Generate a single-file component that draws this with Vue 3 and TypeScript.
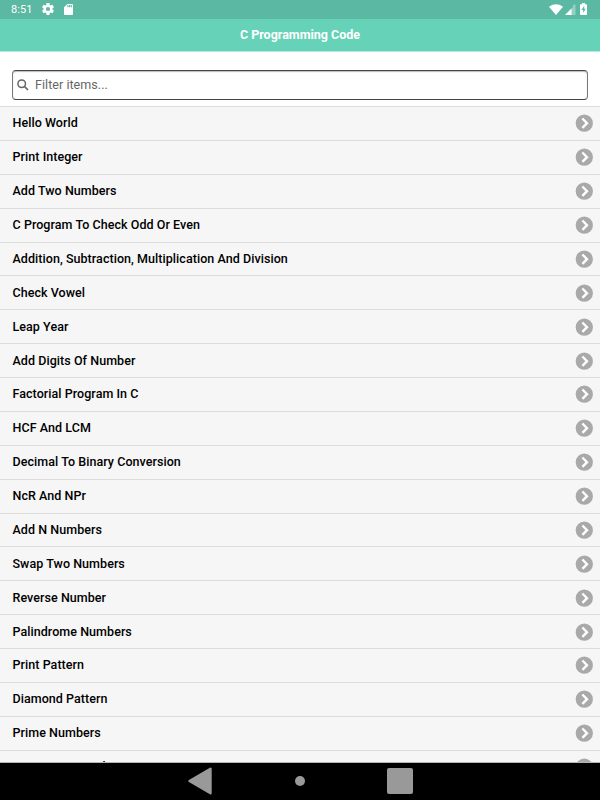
<script setup lang="ts">
const items: string[] = [
  'Hello World', 'Print Integer', 'Add Two Numbers', 'C Program To Check Odd Or Even',
  'Addition, Subtraction, Multiplication And Division', 'Check Vowel', 'Leap Year',
  'Add Digits Of Number', 'Factorial Program In C', 'HCF And LCM',
  'Decimal To Binary Conversion', 'NcR And NPr', 'Add N Numbers', 'Swap Two Numbers',
  'Reverse Number', 'Palindrome Numbers', 'Print Pattern', 'Diamond Pattern',
  'Prime Numbers', 'Armstrong Number',
]
</script>

<template>
  <div class="screen">
    <div class="status">
      <span class="time">8:51</span>
      <svg class="gear" width="12" height="12" viewBox="2 2 20 20"><path fill="#fff" fill-rule="evenodd" d="M19.43 12.98c.04-.32.07-.64.07-.98s-.03-.66-.07-.98l2.11-1.65c.19-.15.24-.42.12-.64l-2-3.46c-.12-.22-.39-.3-.61-.22l-2.49 1c-.52-.4-1.08-.73-1.69-.98l-.38-2.65C14.46 2.18 14.25 2 14 2h-4c-.25 0-.46.18-.49.42l-.38 2.65c-.61.25-1.17.59-1.69.98l-2.49-1c-.23-.09-.49 0-.61.22l-2 3.46c-.13.22-.07.49.12.64l2.11 1.65c-.04.32-.07.65-.07.98s.03.66.07.98l-2.11 1.65c-.19.15-.24.42-.12.64l2 3.46c.12.22.39.3.61.22l2.49-1c.52.4 1.08.73 1.69.98l.38 2.65c.03.24.24.42.49.42h4c.25 0 .46-.18.49-.42l.38-2.65c.61-.25 1.17-.59 1.69-.98l2.49 1c.23.09.49 0 .61-.22l2-3.46c.12-.22.07-.49-.12-.64l-2.11-1.65zM12 15.5a3.5 3.5 0 1 1 0-7 3.5 3.5 0 0 1 0 7z" /></svg>
      <svg class="sd" width="9" height="11" viewBox="4 2 16 20" preserveAspectRatio="none"><path fill="#fff" fill-rule="evenodd" d="M18 2h-8L4 8v12c0 1.100.9 2 2 2h12c1.100 0 2-.9 2-2V4c0-1.100-.9-2-2-2zM12 8h-2V4h2v4zm3 0h-2V4h2v4zm3 0h-2V4h2v4z" /></svg>
      <span class="spacer" />
      <svg width="14" height="11" viewBox="0 0 14 11"><path fill="#fff" d="M0 2.700Q7-2.200 14 2.700L7 11z" /></svg>
      <svg class="signal" width="11" height="11" viewBox="0 0 11 11"><path fill="#fff" fill-opacity=".35" d="M0 11 8 3V.5H10.500V11z" /><path fill="#fff" d="M0 11 6.500 4.500V11z" /></svg>
      <svg class="battery" width="7" height="12" viewBox="0 0 7 12"><path fill="#fff" d="M2 0h3v1.200h1.300q.7 0 .7.700v9.400q0 .7-.7.700H.7Q0 12 0 11.300V1.900q0-.7.700-.7H2z" /><path fill="#5ab8a3" d="M4.200 2.800 1.500 7h1.700v3l2.500-4.200H4.200z" /></svg>
    </div>
    <header class="header">C Programming Code</header>
    <div class="filter">
      <label class="field">
        <svg class="search" width="12" height="12" viewBox="0 0 12 12"><circle cx="4.700" cy="4.700" r="3.800" fill="none" stroke="#666" stroke-width="1.500" /><path d="M7.500 7.500 11 11" stroke="#666" stroke-width="1.700" /></svg>
        <input type="text" placeholder="Filter items..." />
      </label>
    </div>
    <ul class="list">
      <li v-for="item in items" :key="item" class="row">
        <span class="label">{{ item }}</span>
        <svg width="18" height="18" viewBox="0 0 18 18"><circle cx="9.300" cy="9.200" r="8.600" fill="#a9a9a9" /><path d="M7.400 4.500 12 9.200 7.400 13.900" fill="none" stroke="#fff" stroke-width="2.400" /></svg>
      </li>
    </ul>
    <nav class="nav">
      <svg width="24" height="28" viewBox="0 0 24 28"><path d="M1.500 14 22.500 1.700v24.600z" fill="#999" stroke="#999" stroke-width="2.400" stroke-linejoin="round" /></svg>
      <span class="home" />
      <span class="recent" />
    </nav>
  </div>
</template>

<style>
body { margin: 0; overflow: hidden; }
</style>

<style scoped>
.screen { width: 600px; height: 800px; display: flex; flex-direction: column; overflow: hidden; background: #fff; font-family: Roboto, sans-serif; }
.status { height: 19px; flex: none; box-sizing: border-box; display: flex; align-items: center; padding: 0 13px 1px 11px; background: #5ab8a3; color: #fff; }
.time { width: 31px; font-size: 11px; line-height: 18px; padding-top: 1px; letter-spacing: .1px; }
.sd { margin-left: 10px; }
.spacer { flex: 1; }
.signal { margin-left: 2px; }
.battery { margin-left: 4px; }
.header { height: 33px; flex: none; box-sizing: border-box; border-bottom: 1px solid #b5e9db; background: #66d2b7; color: #fff; text-align: center; font-size: 12.500px; font-weight: 700; line-height: 32px; }
.filter { height: 54px; flex: none; box-sizing: border-box; padding: 18px 12px 6px; }
.field { height: 30px; box-sizing: border-box; display: flex; align-items: center; border: 1px solid #444; border-right-color: #777; border-left-color: #777; border-radius: 4px; padding-left: 4px; box-shadow: inset 0 1px 1px #bbb; }
.field input { flex: 1; border: 0; outline: 0; background: transparent; padding: 0 0 1px; margin-left: 6px; font: 12.500px Roboto, sans-serif; letter-spacing: .05px; }
.field input::placeholder { color: #666; opacity: 1; }
.list { flex: 1; min-height: 0; box-sizing: border-box; overflow: hidden; list-style: none; margin: 0; padding: 0; border-bottom: 1px solid #b5b5b5; background: #f6f6f6; }
.row { height: 33.880px; box-sizing: border-box; display: flex; align-items: center; justify-content: space-between; padding: 0 7px 0 12.500px; border-top: 1px solid #ddd; font-size: 12.500px; font-weight: 500; letter-spacing: .055px; color: #000; }
.label { padding-bottom: 1px; }
.nav { height: 37px; flex: none; box-sizing: border-box; padding-bottom: 1px; display: flex; align-items: center; justify-content: center; background: #000; }
.home { width: 10px; height: 10px; margin: 0 82px 0 83px; border-radius: 50%; background: #999; }
.recent { width: 26px; height: 26px; border-radius: 2px; background: #999; }
</style>
